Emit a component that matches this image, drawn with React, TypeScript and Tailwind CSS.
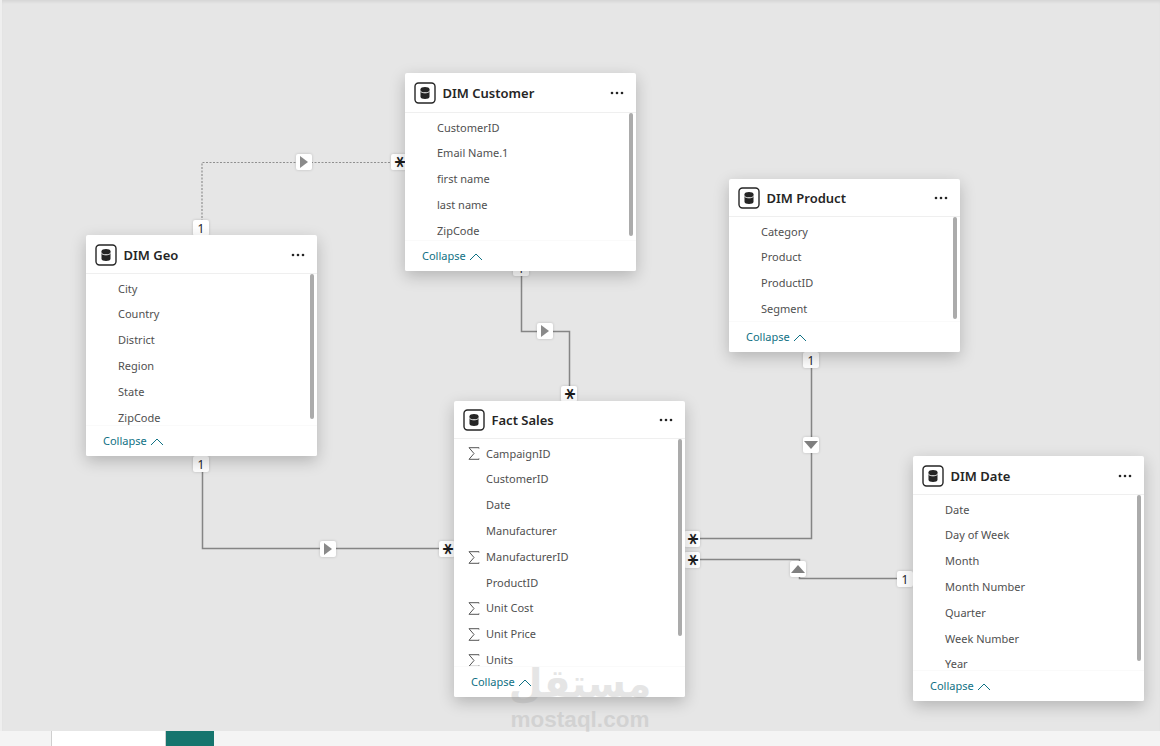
import React from "react";

type Field = { name: string; sum?: boolean };
type Card = { title: string; x: number; y: number; h: number; head: number; thumb: number; nudge: number; fields: Field[] };

const f = (names: string[]): Field[] => names.map((name) => ({ name }));

const cards: Card[] = [
  { title: "DIM Customer", x: 405, y: 73, h: 198, head: 39, thumb: 123, nudge: 0, fields: f(["CustomerID", "Email Name.1", "first name", "last name", "ZipCode"]) },
  { title: "DIM Geo", x: 86, y: 235, h: 221, head: 38, thumb: 145, nudge: 2, fields: f(["City", "Country", "District", "Region", "State", "ZipCode"]) },
  { title: "DIM Product", x: 729, y: 179, h: 173, head: 37, thumb: 102, nudge: 1, fields: f(["Category", "Product", "ProductID", "Segment"]) },
  {
    title: "Fact Sales", x: 454, y: 401, h: 296, head: 37, thumb: 197, nudge: 1,
    fields: [
      { name: "CampaignID", sum: true }, { name: "CustomerID" }, { name: "Date" }, { name: "Manufacturer" },
      { name: "ManufacturerID", sum: true }, { name: "ProductID" }, { name: "Unit Cost", sum: true },
      { name: "Unit Price", sum: true }, { name: "Units", sum: true },
    ],
  },
  { title: "DIM Date", x: 913, y: 456, h: 245, head: 38, thumb: 166, nudge: 2, fields: f(["Date", "Day of Week", "Month", "Month Number", "Quarter", "Week Number", "Year"]) },
];

function TableIcon() {
  return (
    <svg width="22" height="22" viewBox="0 0 22 22" className="shrink-0">
      <rect x="1" y="1" width="20" height="20" rx="3.5" fill="#fff" stroke="#252525" strokeWidth="1.4" />
      <path d="M6.5 7.2c0-1.5 2-2.2 4.500-2.200s4.500.7 4.500 2.200v7.600c0 1.500-2 2.200-4.500 2.200s-4.500-.7-4.500-2.200z" fill="#252525" />
      <path d="M6.500 9.300c1 1.100 2.700 1.500 4.500 1.500s3.500-.4 4.500-1.500" fill="none" stroke="#fff" strokeWidth="1" />
    </svg>
  );
}

function Sigma() {
  return (
    <svg width="12" height="13" viewBox="0 0 12 13" className="shrink-0">
      <path d="M11 1.500V.7H1l5 5.800-5 5.800h10v-.8" fill="none" stroke="#555" strokeWidth="1" />
    </svg>
  );
}

function TableCard({ c }: { c: Card }) {
  return (
    <div
      className="absolute z-10 flex w-[231px] flex-col overflow-hidden rounded-[2px] bg-white shadow-[0_5px_16px_rgba(0,0,0,0.22)]"
      style={{ left: c.x, top: c.y, height: c.h }}
    >
      <div
        className="flex shrink-0 items-center border-b border-[#efefef] pl-[9px] pr-[12px]"
        style={{ height: c.head + 1, paddingTop: c.nudge }}
      >
        <TableIcon />
        <span className="ml-[6.500px] flex-1 pt-[2px] text-[13px] font-semibold text-[#252525]">{c.title}</span>
        <svg width="14" height="4" viewBox="0 0 14 4" className="shrink-0">
          <circle cx="2" cy="2" r="1.300" fill="#252525" />
          <circle cx="7" cy="2" r="1.300" fill="#252525" />
          <circle cx="12" cy="2" r="1.300" fill="#252525" />
        </svg>
      </div>
      <div className="relative flex-1 overflow-hidden pt-[2px]">
        {c.fields.map((fl) => (
          <div key={fl.name} className="flex h-[25.8px] items-center pl-[14px] text-[11px] text-[#505050]">
            <span className="w-[18px] shrink-0">{fl.sum && <Sigma />}</span>
            {fl.name}
          </div>
        ))}
        <div className="absolute right-[3px] top-0 w-[4px] rounded-[2px] bg-[#ababab]" style={{ height: c.thumb }} />
      </div>
      <div className="absolute bottom-0 left-0 right-0 flex h-[31px] items-center border-t border-[#fafafa] bg-white pl-[17px] pt-[1px] text-[11px] text-[#0f7184]">
        Collapse
        <svg width="14" height="8" viewBox="0 0 14 8" className="ml-[3px]">
          <path d="M1 7l6-6 6 6" fill="none" stroke="#0f7184" strokeWidth="1" />
        </svg>
      </div>
    </div>
  );
}

function Badge({ x, y, kind }: { x: number; y: number; kind: string }) {
  return (
    <div
      className="absolute z-[5] flex h-[16px] w-[16px] items-center justify-center rounded-[2px] bg-white text-[12px] leading-none text-[#252525] shadow-[0_0_3px_rgba(0,0,0,0.18)]"
      style={{ left: x - 8, top: y - 8 }}
    >
      {kind === "1" && <span className="pt-[1px]">1</span>}
      {kind === "*" && (
        <span className="-translate-x-[3.200px] rotate-90 font-['DejaVu_Sans',sans-serif] text-[22px] font-bold leading-none text-[#1c1c1c]">*</span>
      )}
      {kind === "r" && (
        <svg width="10" height="12" viewBox="0 0 10 12"><path d="M1 0l8 6-8 6z" fill="#8a8a8a" /></svg>
      )}
      {kind === "d" && (
        <svg width="14" height="8" viewBox="0 0 14 8"><path d="M0 0h14l-7 8z" fill="#7f7f7f" /></svg>
      )}
      {kind === "u" && (
        <svg width="14" height="8" viewBox="0 0 14 8"><path d="M0 8h14L7 0z" fill="#7f7f7f" /></svg>
      )}
    </div>
  );
}

const badges: [number, number, string][] = [
  [201, 228, "1"], [304, 162, "r"], [399, 162, "*"],
  [521, 268, "1"], [545, 331, "r"], [569, 394, "*"],
  [201, 464, "1"], [328, 549, "r"], [447, 549, "*"],
  [811, 360, "1"], [811, 445, "d"], [692, 539, "*"],
  [692, 560, "*"], [798, 569, "u"], [905, 579, "1"],
];

export default function App() {
  return (
    <div className="flex h-[746px] w-[1160px] flex-col overflow-hidden bg-[#e6e6e6] font-['Noto_Sans','Open_Sans',sans-serif]">
      <div className="relative flex-1 border-l-2 border-[#efefef] shadow-[inset_0_3px_3px_-1px_rgba(0,0,0,0.07)]">
        <div className="absolute -left-[2px] top-0 h-[731px] w-[1160px]">
          <svg width="1160" height="731" className="absolute left-0 top-0" fill="none">
            <path d="M202 225V162.500H395" stroke="#8f8f8f" strokeWidth="1.200" strokeDasharray="2 1.500" />
            <path d="M521.500 271V331.500H569.500V390" stroke="#858585" strokeWidth="1.500" />
            <path d="M202.500 456V548.500H440" stroke="#858585" strokeWidth="1.500" />
            <path d="M811.500 352V538.500H700" stroke="#858585" strokeWidth="1.500" />
            <path d="M700 559.500H799.500V578.500H898" stroke="#858585" strokeWidth="1.500" />
          </svg>
          {badges.map(([x, y, k]) => (
            <Badge key={`${x}-${y}`} x={x} y={y} kind={k} />
          ))}
          {cards.map((c) => (
            <TableCard key={c.title} c={c} />
          ))}
          <div className="absolute left-[505px] top-[660px] z-20 flex w-[150px] flex-col items-center text-[#9a9a9a] opacity-25">
            <span className="font-['DejaVu_Sans',sans-serif] text-[39px] font-bold leading-[48px]" dir="rtl">مستقل</span>
            <span className="font-['Liberation_Sans',sans-serif] text-[22.500px] font-bold leading-[24px]">mostaql.com</span>
          </div>
        </div>
      </div>
      <div className="flex h-[15px] shrink-0 bg-[#f4f4f4] pl-[51px]">
        <div className="w-[114px] border-l border-[#cfcfcf] bg-white" />
        <div className="w-[49px] border-l border-[#cfcfcf] bg-[#16756e]" />
      </div>
    </div>
  );
}
